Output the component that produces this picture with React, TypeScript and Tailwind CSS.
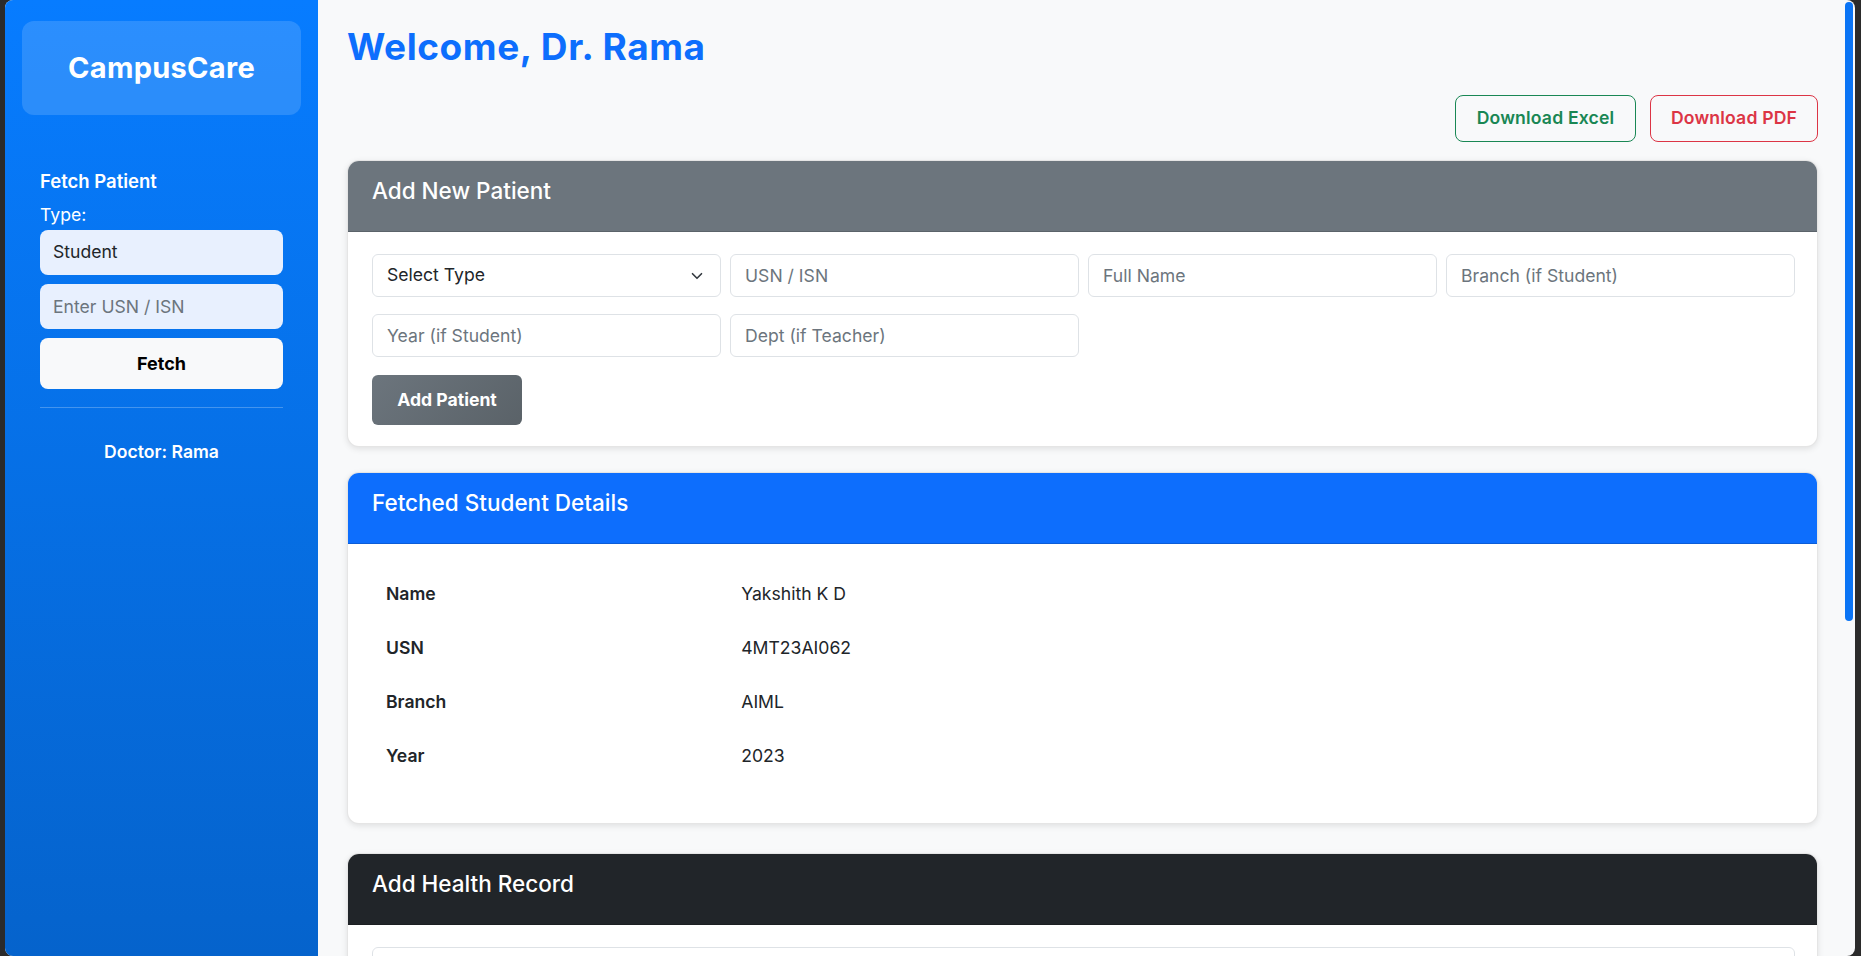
import React from "react";

const font = "font-['Inter','Noto_Sans',sans-serif]";

function Chevron() {
  return (
    <svg width="12" height="12" viewBox="0 0 16 16" fill="none" className="shrink-0">
      <path d="m2 5 6 6 6-6" stroke="#343a40" strokeWidth="2.2" strokeLinecap="round" strokeLinejoin="round" />
    </svg>
  );
}

function Field({ placeholder }: { placeholder: string }) {
  return (
    <input
      placeholder={placeholder}
      className="h-[43px] w-full rounded-[6px] border border-[#dee2e6] bg-white px-[14px] text-[17.6px] text-[#212529] placeholder:text-[#6c757d] outline-none"
    />
  );
}

function CardHeader({ title, bg }: { title: string; bg: string }) {
  return (
    <div className={`h-[71px] border-b border-black/15 px-[24px] pt-[17px] text-[22.5px] font-medium leading-[26px] text-white ${bg}`}>
      {title}
    </div>
  );
}

export default function App() {
  const rows: [string, string][] = [
    ["Name", "Yakshith K D"],
    ["USN", "4MT23AI062"],
    ["Branch", "AIML"],
    ["Year", "2023"],
  ];
  return (
    <div className={`flex h-[956px] w-full overflow-hidden bg-[#2b2b2b] pl-[5px] pr-[6px] ${font}`}>
      <div className="flex flex-1 overflow-hidden rounded-[8px] bg-[#f8f9fa]">
        {/* Sidebar */}
        <aside className="w-[313px] shrink-0 bg-[linear-gradient(180deg,#077cff_0%,#0563cc_100%)] px-[17px] pt-[21px] text-white">
          <div className="flex h-[94px] items-center justify-center rounded-[12px] bg-white/15 text-[29px] font-bold tracking-[0.01em]">
            CampusCare
          </div>
          <div className="px-[18px]">
            <div className="mt-[55px] text-[18.5px] font-semibold leading-[22px]">Fetch Patient</div>
            <div className="mt-[10px] text-[17.6px] leading-[26px]">Type:</div>
            <div className="mt-[2px] flex h-[45px] items-center rounded-[8px] bg-[#e8f0fe] px-[13px] text-[17.6px] text-[#212529]">
              Student
            </div>
            <input
              placeholder="Enter USN / ISN"
              className="mt-[9px] h-[45px] w-full rounded-[8px] bg-[#e8f0fe] px-[13px] text-[17.6px] text-[#212529] placeholder:text-[#6c757d] outline-none"
            />
            <button className="mt-[9px] flex h-[51px] w-full items-center justify-center rounded-[8px] bg-[#f8f9fa] text-[18px] font-bold text-black">
              Fetch
            </button>
            <div className="mt-[18px] border-t border-white/25" />
            <div className="mt-[31px] text-center text-[17.6px] font-semibold leading-[26px]">Doctor: Rama</div>
          </div>
        </aside>

        {/* Main */}
        <main className="flex-1 overflow-hidden pl-[29px] pr-[27px] pt-[25px] text-[#212529]">
          <h2 className="text-[37px] font-bold leading-[44px] tracking-[0.015em] text-[#0d6efd]">Welcome, Dr. Rama</h2>
          <div className="mt-[26px] flex justify-end gap-[14px]">
            <button className="flex h-[47px] w-[181px] items-center justify-center rounded-[8px] border border-[#198754] text-[17.6px] font-semibold tracking-[0.01em] text-[#198754]">
              Download Excel
            </button>
            <button className="flex h-[47px] w-[168px] items-center justify-center rounded-[8px] border border-[#dc3545] text-[17.6px] font-semibold tracking-[0.01em] text-[#dc3545]">
              Download PDF
            </button>
          </div>

          {/* Add New Patient */}
          <section className="mt-[18px] overflow-hidden rounded-[12px] border border-black/10 bg-white shadow-[0_2px_6px_rgba(0,0,0,0.10)]">
            <CardHeader title="Add New Patient" bg="bg-[#6c757d]" />
            <div className="pb-[21px] pl-[24px] pr-[22px] pt-[22px]">
              <div className="grid grid-cols-4 gap-x-[9px] gap-y-[17px]">
                <div className="flex h-[43px] items-center justify-between rounded-[6px] border border-[#dee2e6] bg-white pl-[14px] pr-[17px] text-[17.6px] text-[#212529]">
                  <span>Select Type</span>
                  <Chevron />
                </div>
                <Field placeholder="USN / ISN" />
                <Field placeholder="Full Name" />
                <Field placeholder="Branch (if Student)" />
                <Field placeholder="Year (if Student)" />
                <Field placeholder="Dept (if Teacher)" />
              </div>
              <button className="mt-[18px] flex h-[50px] w-[150px] items-center justify-center rounded-[6px] bg-[linear-gradient(135deg,#6c757d,#5a6268)] text-[17.6px] font-bold text-white">
                Add Patient
              </button>
            </div>
          </section>

          {/* Fetched Student Details */}
          <section className="mt-[25px] overflow-hidden rounded-[12px] border border-black/10 bg-white shadow-[0_2px_6px_rgba(0,0,0,0.10)]">
            <CardHeader title="Fetched Student Details" bg="bg-[#0d6efd]" />
            <div className="px-[24px] pb-[40px] pt-[23px]">
              <table className="w-full border-collapse text-[17.6px]">
                <tbody>
                  {rows.map(([k, v]) => (
                    <tr key={k}>
                      <th className="w-1/4 px-[14px] py-[14px] text-left font-semibold leading-[26px]">{k}</th>
                      <td className="px-[14px] py-[14px] leading-[26px]">{v}</td>
                    </tr>
                  ))}
                </tbody>
              </table>
            </div>
          </section>

          {/* Add Health Record */}
          <section className="mt-[29px] overflow-hidden rounded-[12px] border border-black/10 bg-white shadow-[0_2px_6px_rgba(0,0,0,0.10)]">
            <CardHeader title="Add Health Record" bg="bg-[#212529]" />
            <div className="pb-[22px] pl-[24px] pr-[22px] pt-[22px]">
              <Field placeholder="Symptoms" />
            </div>
          </section>
        </main>

        {/* Scrollbar */}
        <div className="w-[10px] shrink-0">
          <div className="mt-[2px] h-[619px] w-[8px] rounded-full bg-[#0a74f5]" />
        </div>
      </div>
    </div>
  );
}
